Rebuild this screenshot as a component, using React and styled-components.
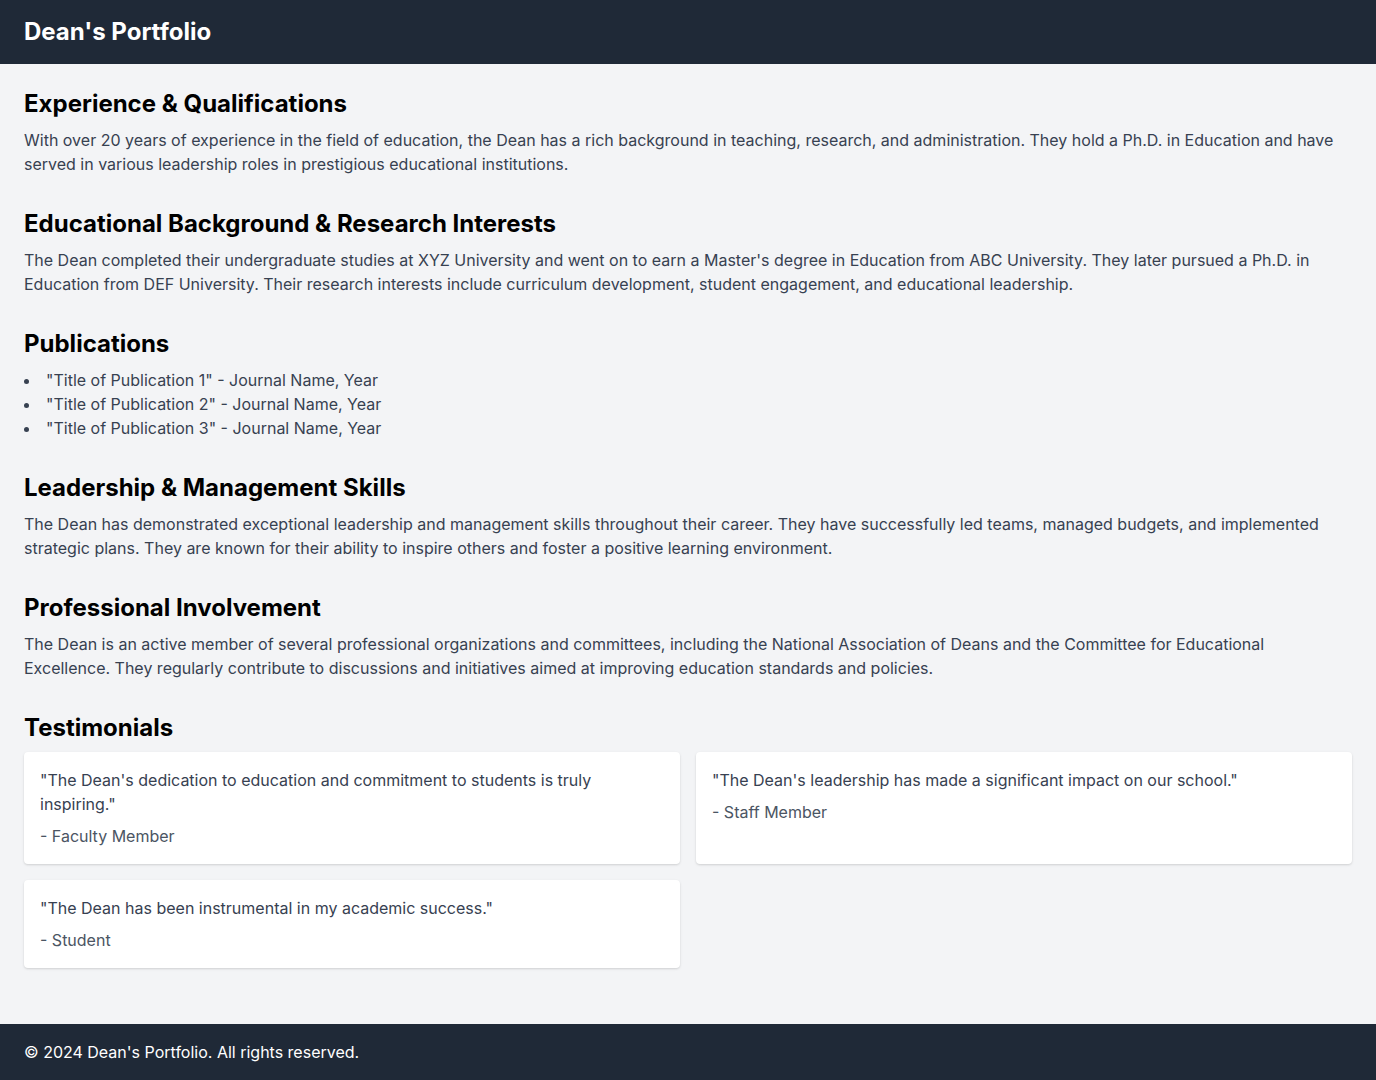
import React from "react";
import styled, { createGlobalStyle } from "styled-components";

const Global = createGlobalStyle`
  * { box-sizing: border-box; }
  html, body { margin: 0; padding: 0; }
  body {
    font-family: Inter, "Noto Sans", sans-serif;
    background: #f3f4f6;
    color: #000;
    -webkit-font-smoothing: antialiased;
  }
`;

const Page = styled.div`
  display: flex;
  flex-direction: column;
  min-height: 1080px;
`;

const Header = styled.header`
  background: #1f2937;
  color: #fff;
  padding: 16px 24px;
`;

const Title = styled.h1`
  margin: 0;
  font-size: 24px;
  line-height: 32px;
  font-weight: 700;
`;

const Main = styled.main`
  flex: 1;
  padding: 24px;
`;

const Section = styled.section`
  margin-bottom: 32px;
`;

const Heading = styled.h2`
  margin: 0 0 8px;
  font-size: 24px;
  line-height: 32px;
  font-weight: 700;
  color: #000;
`;

const Text = styled.p`
  margin: 0;
  font-size: 16px;
  line-height: 24px;
  color: #374151;
`;

const List = styled.ul`
  margin: 0;
  padding: 0;
  list-style: disc inside;
  color: #374151;
  font-size: 16px;
  line-height: 24px;
`;

const Grid = styled.div`
  display: grid;
  grid-template-columns: 1fr 1fr;
  gap: 16px;
`;

const Card = styled.div`
  background: #fff;
  border-radius: 4px;
  padding: 16px;
  box-shadow: 0 1px 3px rgba(0, 0, 0, 0.1), 0 1px 2px rgba(0, 0, 0, 0.06);
`;

const Quote = styled.p`
  margin: 0;
  font-size: 16px;
  line-height: 24px;
  color: #374151;
`;

const Author = styled.p`
  margin: 8px 0 0;
  font-size: 16px;
  line-height: 24px;
  color: #4b5563;
`;

const Footer = styled.footer`
  background: #1f2937;
  color: #fff;
  padding: 16px 24px;
  font-size: 16px;
  line-height: 24px;
`;

const sections = [
  {
    title: "Experience & Qualifications",
    text: "With over 20 years of experience in the field of education, the Dean has a rich background in teaching, research, and administration. They hold a Ph.D. in Education and have served in various leadership roles in prestigious educational institutions.",
  },
  {
    title: "Educational Background & Research Interests",
    text: "The Dean completed their undergraduate studies at XYZ University and went on to earn a Master's degree in Education from ABC University. They later pursued a Ph.D. in Education from DEF University. Their research interests include curriculum development, student engagement, and educational leadership.",
  },
];

const sections2 = [
  {
    title: "Leadership & Management Skills",
    text: "The Dean has demonstrated exceptional leadership and management skills throughout their career. They have successfully led teams, managed budgets, and implemented strategic plans. They are known for their ability to inspire others and foster a positive learning environment.",
  },
  {
    title: "Professional Involvement",
    text: "The Dean is an active member of several professional organizations and committees, including the National Association of Deans and the Committee for Educational Excellence. They regularly contribute to discussions and initiatives aimed at improving education standards and policies.",
  },
];

const testimonials = [
  { q: "\"The Dean's dedication to education and commitment to students is truly inspiring.\"", a: "- Faculty Member" },
  { q: "\"The Dean's leadership has made a significant impact on our school.\"", a: "- Staff Member" },
  { q: "\"The Dean has been instrumental in my academic success.\"", a: "- Student" },
];

export default function App() {
  return (
    <Page>
      <Global />
      <Header>
        <Title>Dean's Portfolio</Title>
      </Header>
      <Main>
        {sections.map((s) => (
          <Section key={s.title}>
            <Heading>{s.title}</Heading>
            <Text>{s.text}</Text>
          </Section>
        ))}
        <Section>
          <Heading>Publications</Heading>
          <List>
            <li>"Title of Publication 1" - Journal Name, Year</li>
            <li>"Title of Publication 2" - Journal Name, Year</li>
            <li>"Title of Publication 3" - Journal Name, Year</li>
          </List>
        </Section>
        {sections2.map((s) => (
          <Section key={s.title}>
            <Heading>{s.title}</Heading>
            <Text>{s.text}</Text>
          </Section>
        ))}
        <Section>
          <Heading>Testimonials</Heading>
          <Grid>
            {testimonials.map((t) => (
              <Card key={t.a}>
                <Quote>{t.q}</Quote>
                <Author>{t.a}</Author>
              </Card>
            ))}
          </Grid>
        </Section>
      </Main>
      <Footer>© 2024 Dean's Portfolio. All rights reserved.</Footer>
    </Page>
  );
}
